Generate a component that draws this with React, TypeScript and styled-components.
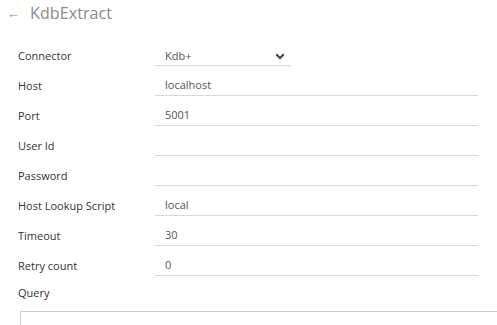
import styled, { createGlobalStyle } from 'styled-components';

const GlobalStyle = createGlobalStyle`
  html, body {
    margin: 0;
    padding: 0;
    background: #ffffff;
    overflow: hidden;
  }
  body {
    font-family: 'Open Sans', 'Noto Sans', sans-serif;
  }
`;

type Field = {
  label: string;
  value: string;
};

const fields: Field[] = [
  { label: 'Host', value: 'localhost' },
  { label: 'Port', value: '5001' },
  { label: 'User Id', value: '' },
  { label: 'Password', value: '' },
  { label: 'Host Lookup Script', value: 'local' },
  { label: 'Timeout', value: '30' },
  { label: 'Retry count', value: '0' },
];

function App() {
  return (
    <>
      <GlobalStyle />
      <StyledPage>
        <StyledHeader>
          <StyledBack>←</StyledBack>
          <StyledTitle>KdbExtract</StyledTitle>
        </StyledHeader>
        <StyledForm>
          <StyledRow>
            <StyledLabel>Connector</StyledLabel>
            <StyledSelect>
              <span>Kdb+</span>
              <svg width="10" height="7" viewBox="0 0 10 7">
                <path d="M1.2 1.3 L5 5 L8.8 1.3" fill="none" stroke="#444" strokeWidth="2" />
              </svg>
            </StyledSelect>
          </StyledRow>
          {fields.map((f) => (
            <StyledRow key={f.label}>
              <StyledLabel>{f.label}</StyledLabel>
              <StyledInput>{f.value}</StyledInput>
            </StyledRow>
          ))}
          <StyledQueryLabel>Query</StyledQueryLabel>
          <StyledTextArea />
        </StyledForm>
      </StyledPage>
    </>
  );
}

export default App;

const StyledPage = styled.main`
  width: 497px;
  height: 325px;
  overflow: hidden;
`;

const StyledHeader = styled.header`
  display: flex;
  align-items: center;
  height: 26px;
  padding: 0 0 10px 7px;
  box-sizing: content-box;
`;

const StyledBack = styled.span`
  font-size: 13px;
  line-height: 13px;
  color: #8a8a8a;
  margin-top: 1px;
  width: 23px;
`;

const StyledTitle = styled.h1`
  margin: 0;
  font-size: 16px;
  font-weight: 400;
  color: #8a8a8a;
  letter-spacing: 0.1px;
`;

const StyledForm = styled.section`
  padding: 0 19px 0 18px;
`;

const StyledRow = styled.div`
  display: grid;
  grid-template-columns: 137px 1fr;
  align-items: end;
  height: 30px;
`;

const StyledLabel = styled.label`
  font-size: 11px;
  line-height: 20px;
  color: #333;
`;

const StyledInput = styled.div`
  height: 20px;
  line-height: 20px;
  padding-left: 10px;
  font-size: 11px;
  color: #555;
  border-bottom: 1px solid #d6d9dd;
`;

const StyledSelect = styled(StyledInput)`
  width: 136px;
  box-sizing: border-box;
  display: flex;
  align-items: center;
  justify-content: space-between;
  padding-right: 6px;

  svg {
    margin-top: 1px;
  }
`;

const StyledQueryLabel = styled(StyledLabel)`
  display: block;
  height: 31px;
  line-height: 33px;
`;

const StyledTextArea = styled.div`
  margin: 4px 0 0 2px;
  width: 500px;
  height: 40px;
  border: 1px solid #cfcfcf;
`;
